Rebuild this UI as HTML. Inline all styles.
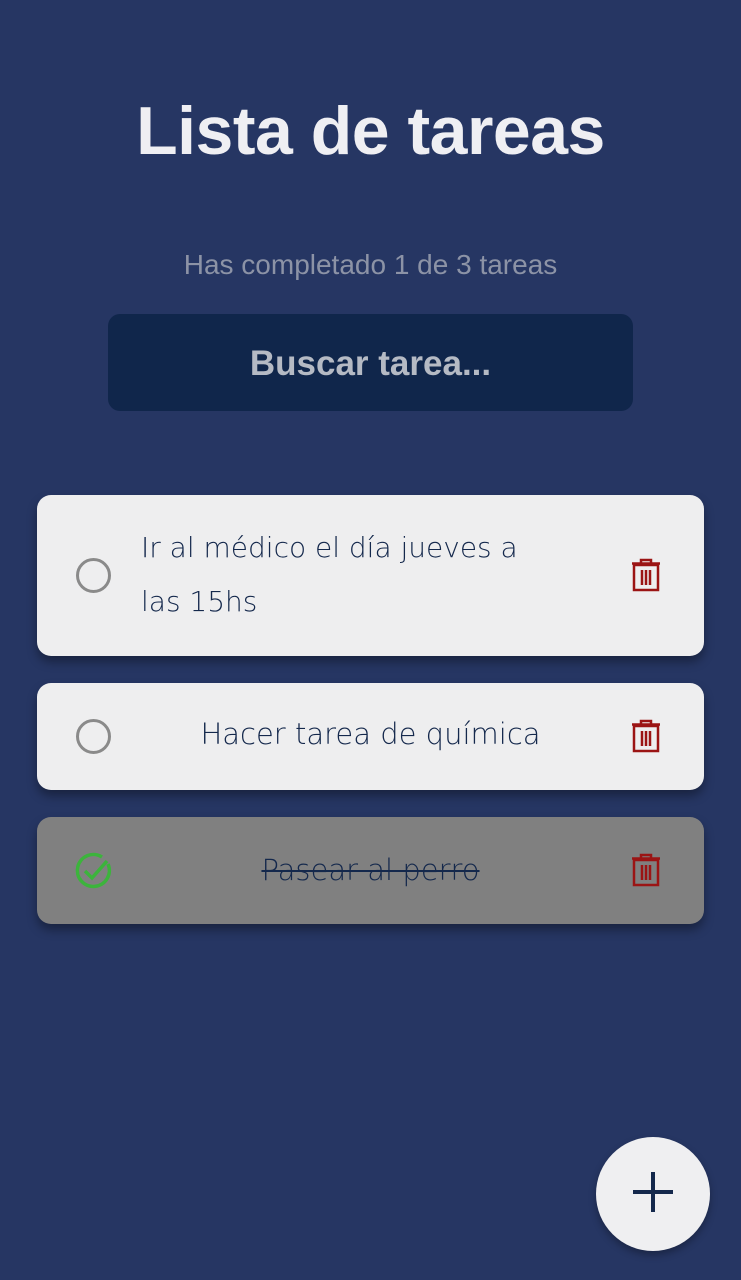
<!DOCTYPE html>
<html><head><meta charset="utf-8"><style>
body{margin:0;width:741px;height:1280px;background:#263663;font-family:"Liberation Sans",sans-serif;position:relative;overflow:hidden}
h1{position:absolute;top:92px;left:0;width:741px;text-align:center;margin:0;color:#efeff3;font-size:68px;font-weight:bold;letter-spacing:-0.5px}
.sub{position:absolute;top:249px;width:741px;text-align:center;color:#8c93a6;font-size:28px}
.search{position:absolute;left:108px;top:314px;width:525px;height:97px;background:#10264b;border-radius:12px;color:#b5bac4;font-size:35px;font-weight:bold;text-align:center;line-height:100px}
.card{position:absolute;left:37px;width:667px;background:#eeeeef;border-radius:14px;box-shadow:0 6px 10px rgba(0,0,0,.35);color:#14284c;font-size:30px}
.circ{position:absolute;left:39px;width:35px;height:35px;border:3px solid #8a8a8a;border-radius:50%;box-sizing:border-box}
.txt{position:absolute;font-family:"DejaVu Sans",sans-serif;font-weight:300}
.trash{position:absolute;left:594px}
.fab{position:absolute;left:596px;top:1137px;width:114px;height:114px;border-radius:50%;background:#efeff1;box-shadow:0 4px 8px rgba(0,0,0,.3)}
</style></head><body>
<h1>Lista de tareas</h1>
<div class="sub">Has completado 1 de 3 tareas</div>
<div class="search">Buscar tarea...</div>

<div class="card" style="top:495px;height:161px">
<div class="circ" style="top:63px"></div>
<div class="txt" style="left:104px;top:26px;line-height:54px;width:420px;font-size:28px">Ir al médico el día jueves a las 15hs</div>
<svg class="trash" style="top:63px" width="30" height="34" viewBox="0 0 30 34"><rect x="3" y="7" width="24" height="25" fill="none" stroke="#9b1414" stroke-width="2.5"/><path d="M1 5.5H29M10 5V2H20V5M11 12V27M15 12V27M19 12V27" stroke="#9b1414" stroke-width="2.5" fill="none"/></svg>
</div>

<div class="card" style="top:683px;height:107px">
<div class="circ" style="top:36px"></div>
<div class="txt" style="left:0;width:667px;text-align:center;top:34px;font-size:29px">Hacer tarea de química</div>
<svg class="trash" style="top:36px" width="30" height="34" viewBox="0 0 30 34"><rect x="3" y="7" width="24" height="25" fill="none" stroke="#9b1414" stroke-width="2.5"/><path d="M1 5.5H29M10 5V2H20V5M11 12V27M15 12V27M19 12V27" stroke="#9b1414" stroke-width="2.5" fill="none"/></svg>
</div>

<div class="card" style="top:817px;height:107px;background:#808080">
<svg style="position:absolute;left:38px;top:35px" width="38" height="38" viewBox="0 0 38 38"><path d="M33 12A16 16 0 1 1 27 5" fill="none" stroke="#3cb43c" stroke-width="3.5"/><path d="M10 19L17 26L32 9" fill="none" stroke="#3cb43c" stroke-width="3.5"/></svg>
<div class="txt" style="left:0;width:667px;text-align:center;top:36px;font-size:29px;text-decoration:line-through">Pasear al perro</div>
<svg class="trash" style="top:36px" width="30" height="34" viewBox="0 0 30 34"><rect x="3" y="7" width="24" height="25" fill="none" stroke="#9b1414" stroke-width="2.5"/><path d="M1 5.5H29M10 5V2H20V5M11 12V27M15 12V27M19 12V27" stroke="#9b1414" stroke-width="2.5" fill="none"/></svg>
</div>

<div class="fab"><svg style="position:absolute;left:35px;top:33px" width="44" height="44" viewBox="0 0 44 44"><path d="M22 2V42M2 22H42" stroke="#14284c" stroke-width="4"/></svg></div>
</body></html>
